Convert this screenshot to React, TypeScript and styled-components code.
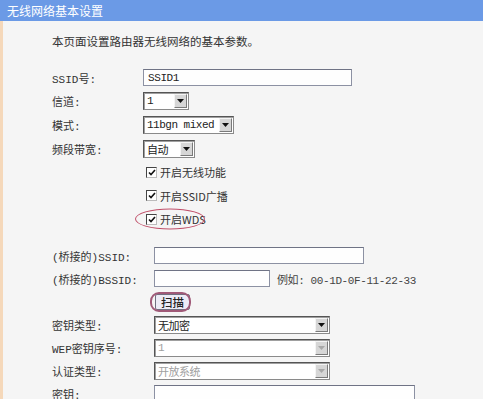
import React from 'react';
import styled, { createGlobalStyle } from 'styled-components';

const GlobalStyle = createGlobalStyle`
    html, body {
        margin: 0;
        padding: 0;
        background: #f5f5f5;
    }
    * {
        box-sizing: border-box;
    }
`;

const FONT = '"Liberation Mono", "Noto Sans CJK SC", monospace';

const Page = styled.div`
    width: 483px;
    height: 399px;
    overflow: hidden;
    background: #f5f5f5;
    font-family: ${FONT};
    font-size: 11px;
    color: #333;
`;

const TitleBar = styled.div`
    height: 21px;
    line-height: 21px;
    padding-left: 7px;
    background: #6b9ae6;
    color: #fff;
    font-family: "Noto Sans CJK SC", sans-serif;
    font-size: 12px;
`;

const Body = styled.div`
    height: 378px;
    border-left: 3px solid #f5d8ba;
    padding: 14px 0 0 49px;
`;

const Intro = styled.p`
    margin: 0 0 15px;
    line-height: 16px;
    font-size: 11.5px;
`;

const FormTable = styled.div<{ $labelWidth: number; $row: number; $gap?: number }>`
    display: grid;
    grid-template-columns: ${(p) => p.$labelWidth}px 1fr;
    grid-auto-rows: ${(p) => p.$row}px;
    align-items: center;
    margin-bottom: ${(p) => p.$gap ?? 0}px;
`;

const Label = styled.div`
    white-space: nowrap;
`;

const Cell = styled.div`
    display: flex;
    align-items: center;
    gap: 7px;
    position: relative;
    height: 100%;
    white-space: nowrap;
`;

const TextInput = styled.input<{ $width: number }>`
    width: ${(p) => p.$width}px;
    height: 17px;
    padding: 0 4px;
    border: 1px solid #8c91a3;
    border-top-color: #6f7385;
    background: #fefefe;
    font-family: ${FONT};
    font-size: 11px;
    letter-spacing: -0.4px;
    color: #222;
    outline: none;
`;

const SelectBox = styled.div<{ $width: number; $disabled?: boolean }>`
    display: flex;
    align-items: center;
    justify-content: space-between;
    width: ${(p) => p.$width}px;
    height: 18px;
    padding: 0 1px 0 3px;
    border: 1px solid #555;
    border-right-color: #8a8a8a;
    border-bottom-color: #8a8a8a;
    box-shadow: inset 1px 1px 0 #a0a0a0;
    background: #fff;
    letter-spacing: -0.5px;
    color: ${(p) => (p.$disabled ? '#a0a0a0' : '#222')};
`;

const ArrowButton = styled.span<{ $disabled?: boolean }>`
    display: flex;
    flex: none;
    align-items: center;
    justify-content: center;
    width: 13px;
    height: 14px;
    background: #d6d6d6;
    border: 1px solid #f4f4f4;
    border-right-color: #7a7a7a;
    border-bottom-color: #7a7a7a;
    color: ${(p) => (p.$disabled ? '#a8a8a8' : '#111')};
`;

const CheckLine = styled.label`
    display: flex;
    align-items: center;
    gap: 3px;
    margin-left: 3px;
    font-family: "Noto Sans CJK SC", sans-serif;
`;

const CheckBox = styled.span`
    display: flex;
    align-items: center;
    justify-content: center;
    width: 11px;
    height: 11px;
    border: 1px solid #444;
    border-right-color: #bbb;
    border-bottom-color: #bbb;
    background: #fff;
`;

// red marker rings drawn over the form, as in the annotated screenshot
const Ring = styled.span<{ $left: number; $w: number; $h: number }>`
    position: absolute;
    left: ${(p) => p.$left}px;
    top: 50%;
    width: ${(p) => p.$w}px;
    height: ${(p) => p.$h}px;
    transform: translateY(-50%);
    border: 1px solid #c0506a;
    border-radius: 50%;
    pointer-events: none;
`;

const PillRing = styled(Ring)`
    border: 2px solid #a05a78;
    border-radius: 9px;
`;

const ScanButton = styled.button`
    height: 16px;
    margin-left: 1px;
    padding: 0 5px;
    border: 1px solid #707080;
    border-radius: 2px;
    background: #ececf6;
    font-family: "Noto Sans CJK SC", sans-serif;
    font-size: 11.5px;
    font-weight: 500;
    line-height: 14px;
    color: #222;
`;

const Hint = styled.span`
    color: #444;
    letter-spacing: -0.4px;
`;

const Arrow = () => (
    <svg width="7" height="4" viewBox="0 0 7 4">
        <path d="M0 0h7L3.5 4z" fill="currentColor" />
    </svg>
);

const Tick = () => (
    <svg width="8" height="7" viewBox="0 0 8 7">
        <path d="M1 3.5l2 2L7 1" stroke="#111" strokeWidth="1.6" fill="none" />
    </svg>
);

const Select: React.FC<{ width: number; value: string; disabled?: boolean }> = ({ width, value, disabled }) => (
    <SelectBox $width={width} $disabled={disabled}>
        <span>{value}</span>
        <ArrowButton $disabled={disabled}>
            <Arrow />
        </ArrowButton>
    </SelectBox>
);

const Check: React.FC<{ text: string }> = ({ text }) => (
    <CheckLine>
        <CheckBox>
            <Tick />
        </CheckBox>
        {text}
    </CheckLine>
);

const App: React.FC = () => {
    return (
        <Page>
            <GlobalStyle />
            <TitleBar>无线网络基本设置</TitleBar>
            <Body>
                <Intro>本页面设置路由器无线网络的基本参数。</Intro>
                <FormTable $labelWidth={91} $row={23.6} $gap={13}>
                    <Label>SSID号:</Label>
                    <Cell>
                        <TextInput $width={209} defaultValue="SSID1" readOnly />
                    </Cell>
                    <Label>信道:</Label>
                    <Cell>
                        <Select width={46} value="1" />
                    </Cell>
                    <Label>模式:</Label>
                    <Cell>
                        <Select width={91} value="11bgn mixed" />
                    </Cell>
                    <Label>频段带宽:</Label>
                    <Cell>
                        <Select width={52} value="自动" />
                    </Cell>
                    <Label />
                    <Cell>
                        <Check text="开启无线功能" />
                    </Cell>
                    <Label />
                    <Cell>
                        <Check text="开启SSID广播" />
                    </Cell>
                    <Label />
                    <Cell>
                        <Check text="开启WDS" />
                        <Ring $left={-8} $w={70} $h={21} />
                    </Cell>
                </FormTable>
                <FormTable $labelWidth={102} $row={23}>
                    <Label>(桥接的)SSID:</Label>
                    <Cell>
                        <TextInput $width={210} readOnly />
                    </Cell>
                    <Label>(桥接的)BSSID:</Label>
                    <Cell>
                        <TextInput $width={116} readOnly />
                        <Hint>例如: 00-1D-0F-11-22-33</Hint>
                    </Cell>
                    <Label />
                    <Cell>
                        <ScanButton>扫描</ScanButton>
                        <PillRing $left={-4} $w={41} $h={20} />
                    </Cell>
                    <Label>密钥类型:</Label>
                    <Cell>
                        <Select width={176} value="无加密" />
                    </Cell>
                    <Label>WEP密钥序号:</Label>
                    <Cell>
                        <Select width={176} value="1" disabled />
                    </Cell>
                    <Label>认证类型:</Label>
                    <Cell>
                        <Select width={176} value="开放系统" disabled />
                    </Cell>
                    <Label>密钥:</Label>
                    <Cell>
                        <TextInput $width={261} readOnly />
                    </Cell>
                </FormTable>
            </Body>
        </Page>
    );
};

export default App;
